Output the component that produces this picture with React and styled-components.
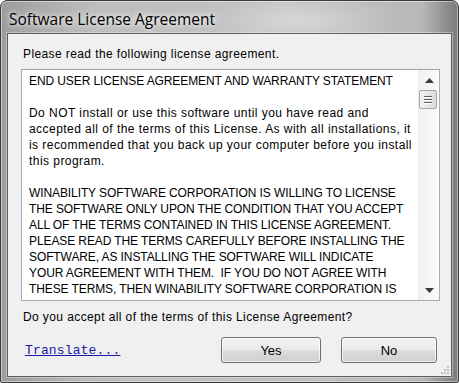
import React from "react";
import styled, { createGlobalStyle } from "styled-components";

const Global = createGlobalStyle`
  html, body { margin: 0; padding: 0; background: #ffffff; }
  * { box-sizing: border-box; }
`;

const Window = styled.div`
  width: 459px;
  height: 383px;
  display: flex;
  flex-direction: column;
  border: 1px solid #3c3c3c;
  border-radius: 7px 7px 2px 2px;
  padding: 0 6px 5px 6px;
  background:
    radial-gradient(ellipse 140px 40px at 300px 20px, rgba(255,255,255,0.35), rgba(255,255,255,0) 70%),
    linear-gradient(90deg, #9c9c9c 0%, #bdbdbd 20%, #c2c2c2 60%, #b8b8b8 92%, #7a7a7a 100%);
  box-shadow: inset 0 0 0 1px rgba(255,255,255,0.45);
  overflow: hidden;
`;

const TitleBar = styled.div`
  height: 32px;
  display: flex;
  align-items: center;
  padding-left: 2px;
  padding-top: 3px;
`;

const Title = styled.span`
  font-family: "Open Sans", "Noto Sans", sans-serif;
  font-size: 15.5px;
  color: #000;
  text-shadow: 0 0 8px rgba(255,255,255,0.9), 0 0 4px rgba(255,255,255,0.9);
`;

const Client = styled.div`
  flex: 1;
  position: relative;
  display: flex;
  flex-direction: column;
  background: #f0f0f0;
  border: 1px solid #5e5e5e;
  box-shadow: 0 0 0 1px rgba(255,255,255,0.35);
  padding: 12px 11px 0 13px;
  font-family: "Liberation Sans", Arial, sans-serif;
  font-size: 12px;
  color: #000;
`;

const Label = styled.div`
  line-height: 16px;
  padding-left: 2px;
  letter-spacing: 0.4px;
  margin-top: ${(p) => p.$mt || 0}px;
`;

const TextBox = styled.div`
  margin-top: 7px;
  height: 232px;
  display: flex;
  border: 1px solid #abadb3;
  border-top-color: #9da0a8;
  background: #ffffff;
  overflow: hidden;
`;

const TextContent = styled.div`
  flex: 1;
  padding: 3px 0 0 7px;
  line-height: 16px;
  white-space: pre;
  overflow: hidden;
`;

const Line = styled.div`
  height: 16px;
  letter-spacing: ${(p) => (p.$caps ? "-0.1px" : "0.45px")};
`;

const ScrollBar = styled.div`
  width: 21px;
  display: flex;
  flex-direction: column;
  align-items: center;
  border-left: 1px solid #eaeaea;
  background: linear-gradient(90deg, #f1f1f1, #fbfbfb);
`;

const Arrow = styled.div`
  height: 20px;
  width: 100%;
  display: flex;
  align-items: center;
  justify-content: center;
`;

const Thumb = styled.div`
  width: 18px;
  height: 19px;
  margin-left: -2px;
  border: 1px solid #a7a7a7;
  border-radius: 2px;
  background: linear-gradient(90deg, #f4f4f4, #e6e6e6 50%, #dadada);
  display: flex;
  flex-direction: column;
  align-items: center;
  justify-content: center;
  gap: 2px;
`;

const Grip = styled.span`
  display: block;
  width: 8px;
  height: 1px;
  background: #606060;
  box-shadow: 0 1px 0 #ffffff;
`;

const Track = styled.div`
  flex: 1;
`;

const Footer = styled.div`
  margin-top: 12px;
  display: flex;
  align-items: center;
  padding-right: 3px;
`;

const Link = styled.a`
  font-family: "Liberation Mono", "Courier New", monospace;
  font-size: 13px;
  letter-spacing: 0.15px;
  color: #1a1aa8;
  text-decoration: underline;
  margin-left: 4px;
  margin-right: auto;
  cursor: pointer;
`;

const Button = styled.button`
  width: ${(p) => p.$w || 96}px;
  height: 26px;
  margin-left: ${(p) => p.$ml || 0}px;
  border: 1px solid #707070;
  border-radius: 3px;
  background: linear-gradient(180deg, #f2f2f2 0%, #ebebeb 48%, #dddddd 52%, #cfcfcf 100%);
  box-shadow: inset 0 0 0 1px rgba(255,255,255,0.7);
  font-family: "Liberation Sans", Arial, sans-serif;
  font-size: 13px;
  color: #000;
  padding: 0;
`;

const SizeGrip = styled.svg`
  position: absolute;
  right: 1px;
  bottom: 1px;
`;

const lines = [
  { t: "END USER LICENSE AGREEMENT AND WARRANTY STATEMENT", caps: true },
  { t: "" },
  { t: "Do NOT install or use this software until you have read and" },
  { t: "accepted all of the terms of this License. As with all installations, it" },
  { t: "is recommended that you back up your computer before you install" },
  { t: "this program." },
  { t: "" },
  { t: "WINABILITY SOFTWARE CORPORATION IS WILLING TO LICENSE", caps: true },
  { t: "THE SOFTWARE ONLY UPON THE CONDITION THAT YOU ACCEPT", caps: true },
  { t: "ALL OF THE TERMS CONTAINED IN THIS LICENSE AGREEMENT.", caps: true },
  { t: "PLEASE READ THE TERMS CAREFULLY BEFORE INSTALLING THE", caps: true },
  { t: "SOFTWARE, AS INSTALLING THE SOFTWARE WILL INDICATE", caps: true },
  { t: "YOUR AGREEMENT WITH THEM.  IF YOU DO NOT AGREE WITH", caps: true },
  { t: "THESE TERMS, THEN WINABILITY SOFTWARE CORPORATION IS", caps: true },
];

export default function App() {
  return (
    <>
      <Global />
      <Window>
        <TitleBar>
          <Title>Software License Agreement</Title>
        </TitleBar>
        <Client>
          <Label>Please read the following license agreement.</Label>
          <TextBox>
            <TextContent>
              {lines.map((l, i) => (
                <Line key={i} $caps={l.caps}>
                  {l.t}
                </Line>
              ))}
            </TextContent>
            <ScrollBar>
              <Arrow>
                <svg width="9" height="5" viewBox="0 0 9 5">
                  <path d="M0 5 L4.5 0 L9 5 Z" fill="#3b3b3b" />
                </svg>
              </Arrow>
              <Thumb>
                <Grip />
                <Grip />
                <Grip />
              </Thumb>
              <Track />
              <Arrow>
                <svg width="9" height="5" viewBox="0 0 9 5">
                  <path d="M0 0 L9 0 L4.5 5 Z" fill="#3b3b3b" />
                </svg>
              </Arrow>
            </ScrollBar>
          </TextBox>
          <Label $mt={8}>Do you accept all of the terms of this License Agreement?</Label>
          <Footer>
            <Link>Translate...</Link>
            <Button $w={100}>Yes</Button>
            <Button $w={96} $ml={20}>No</Button>
          </Footer>
          <SizeGrip width="10" height="10" viewBox="0 0 10 10">
            <rect x="7" y="1" width="2" height="2" fill="#c0c0c0" />
            <rect x="4" y="4" width="2" height="2" fill="#c0c0c0" />
            <rect x="7" y="4" width="2" height="2" fill="#c0c0c0" />
            <rect x="1" y="7" width="2" height="2" fill="#c0c0c0" />
            <rect x="4" y="7" width="2" height="2" fill="#c0c0c0" />
            <rect x="7" y="7" width="2" height="2" fill="#c0c0c0" />
          </SizeGrip>
        </Client>
      </Window>
    </>
  );
}
